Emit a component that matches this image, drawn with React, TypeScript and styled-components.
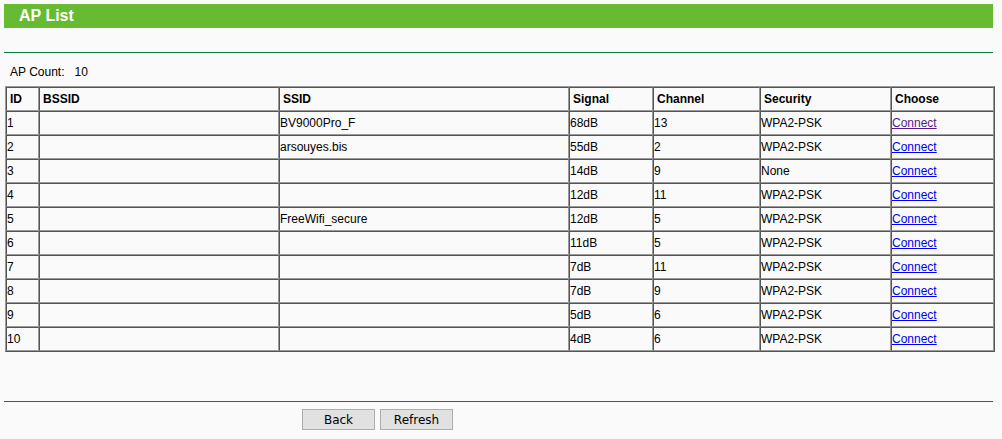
import * as React from 'react'
import styled, { createGlobalStyle } from 'styled-components'

const GlobalStyle = createGlobalStyle`
    body {
        margin: 0;
        background: #fafafa;
        font-family: "Liberation Sans", Arial, sans-serif;
        font-size: 12px;
        color: #000;
    }
`

const Page = styled.div`
    width: 989px;
    padding: 4px 0 0 4px;
`

const TitleBar = styled.div`
    height: 24px;
    line-height: 24px;
    padding-left: 15px;
    background: #66bb33;
    color: #fff;
    font-size: 16px;
    font-weight: 700;
`

const Rule = styled.div<{ $top: number }>`
    margin-top: ${(p) => p.$top}px;
    border-top: 1px solid #0a7c3c;
`

const CountRow = styled.div`
    display: flex;
    gap: 10px;
    padding: 11px 0 0 6px;
    height: 22px;
    line-height: 16px;
`

const Table = styled.table`
    width: 988px;
    margin-left: 1px;
    border-collapse: separate;
    border-spacing: 0;
    border: 1px solid;
    border-color: #9a9a9a #555 #555 #9a9a9a;
    table-layout: fixed;
`

const Cell = styled.td<{ $head?: boolean }>`
    height: 22px;
    border: 1px solid;
    border-color: #555 #9a9a9a #9a9a9a #555;
    font-weight: ${(p) => (p.$head ? 700 : 400)};
    padding: 0 0 0 ${(p) => (p.$head ? 3 : 0)}px;
    white-space: nowrap;
    vertical-align: middle;
`

const Link = styled.a<{ $visited?: boolean }>`
    color: ${(p) => (p.$visited ? '#551a8b' : '#0000ee')};
    text-decoration: underline;
`

const ButtonRow = styled.div`
    display: flex;
    gap: 5px;
    padding: 7px 0 0 298px;
`

const Button = styled.button`
    width: 73px;
    height: 21px;
    padding: 0;
    background: #e1e1e1;
    border: 1px solid #adadad;
    font-family: "DejaVu Sans", Tahoma, sans-serif;
    font-size: 12px;
    color: #000;
`

const widths = [33, 240, 290, 84, 107, 131, 103]
const headers = ['ID', 'BSSID', 'SSID', 'Signal', 'Channel', 'Security', 'Choose']

const rows = [
    ['BV9000Pro_F', '68dB', '13', 'WPA2-PSK'],
    ['arsouyes.bis', '55dB', '2', 'WPA2-PSK'],
    ['', '14dB', '9', 'None'],
    ['', '12dB', '11', 'WPA2-PSK'],
    ['FreeWifi_secure', '12dB', '5', 'WPA2-PSK'],
    ['', '11dB', '5', 'WPA2-PSK'],
    ['', '7dB', '11', 'WPA2-PSK'],
    ['', '7dB', '9', 'WPA2-PSK'],
    ['', '5dB', '6', 'WPA2-PSK'],
    ['', '4dB', '6', 'WPA2-PSK']
]

const App: React.FC = () => (
    <Page>
        <GlobalStyle />
        <TitleBar>AP List</TitleBar>
        <Rule $top={24} />
        <CountRow>
            <span>AP Count:</span>
            <span>10</span>
        </CountRow>
        <Table>
            <colgroup>
                {widths.map((w, i) => (
                    <col key={i} style={{ width: w }} />
                ))}
            </colgroup>
            <thead>
                <tr>
                    {headers.map((h) => (
                        <Cell as="th" $head key={h} style={{ textAlign: 'left' }}>
                            {h}
                        </Cell>
                    ))}
                </tr>
            </thead>
            <tbody>
                {rows.map((r, i) => (
                    <tr key={i}>
                        <Cell>{i + 1}</Cell>
                        <Cell />
                        <Cell>{r[0]}</Cell>
                        <Cell>{r[1]}</Cell>
                        <Cell>{r[2]}</Cell>
                        <Cell>{r[3]}</Cell>
                        <Cell>
                            <Link href="#" $visited={i === 0}>
                                Connect
                            </Link>
                        </Cell>
                    </tr>
                ))}
            </tbody>
        </Table>
        <Rule $top={49} />
        <ButtonRow>
            <Button>Back</Button>
            <Button>Refresh</Button>
        </ButtonRow>
    </Page>
)

export default App
